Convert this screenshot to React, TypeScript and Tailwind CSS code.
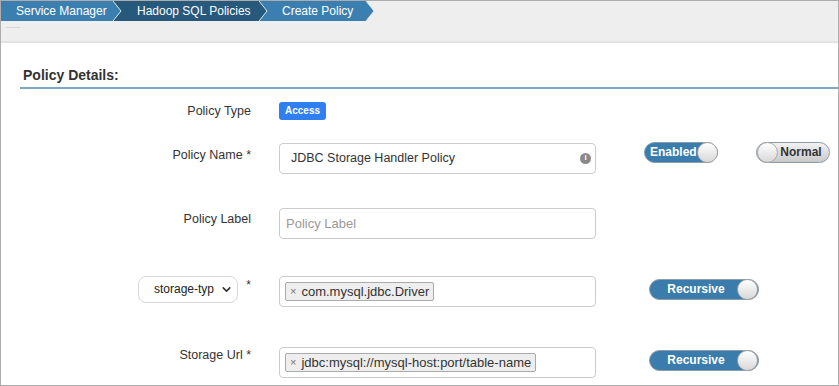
import React from 'react';
import { ChevronDown } from 'lucide-react';

const crumbs = [
  { label: 'Service Manager', bg: '#3b7fb0', next: '#27597c', w: 'w-[112px]', pl: 'pl-[15px]' },
  { label: 'Hadoop SQL Policies', bg: '#27597c', next: '#3b7fb0', w: 'w-[137px]', pl: 'pl-[15px]' },
  { label: 'Create Policy', bg: '#3b7fb0', next: '#eeeeee', w: 'w-[98px]', pl: 'pl-[14px]' },
];

function Crumb({ label, bg, next, w, pl }: (typeof crumbs)[number]) {
  return (
    <div className="flex h-[20px] items-stretch">
      <div className={`${w} ${pl} flex items-center text-[12px] text-white`} style={{ backgroundColor: bg }}>
        {label}
      </div>
      <svg width="9" height="20" viewBox="0 0 9 20" className="block">
        <rect width="9" height="20" fill={next} />
        <path d="M0 0 L8 10 L0 20 Z" fill={bg} />
        <path d="M0 0 L8 10 L0 20" fill="none" stroke="#dbe6ee" strokeWidth="1" />
      </svg>
    </div>
  );
}

function Toggle({ label, on, width }: { label: string; on: boolean; width: string }) {
  return (
    <div
      className={`${width} flex h-[21px] items-center rounded-full border border-[#8c9aa6] ${
        on ? 'bg-[#3a7cab] pl-[5px]' : 'flex-row-reverse bg-gradient-to-b from-[#f2f2f2] to-[#c9c9c9] pr-[5px]'
      }`}
    >
      <span className={`flex-1 text-center text-[12px] font-bold ${on ? 'text-white' : 'text-[#333]'}`}>{label}</span>
      <span className="h-[21px] w-[21px] shrink-0 rounded-full border border-[#a7a7a7] bg-gradient-to-b from-white to-[#d8d8d8]" />
    </div>
  );
}

function Tag({ text }: { text: string }) {
  return (
    <span className="flex h-[19px] items-center gap-[5px] rounded-[2px] border border-[#aaaaaa] bg-[#eeeeee] px-[4px] text-[13px] text-[#333]">
      <span className="text-[11px] text-[#777]">×</span>
      {text}
    </span>
  );
}

function Label({ children }: { children: React.ReactNode }) {
  return <div className="w-[250px] shrink-0 text-right text-[12.5px] text-[#333]">{children}</div>;
}

export default function App() {
  return (
    <div
      className="flex h-[386px] w-[839px] flex-col overflow-hidden border border-[#acacac] bg-white"
      style={{ fontFamily: '"Liberation Sans", Arial, sans-serif' }}
    >
      {/* Breadcrumb header */}
      <div className="h-[42px] shrink-0 border-b-2 border-[#e3e3e3] bg-[#eeeeee]">
        <div className="flex">
          {crumbs.map((c) => (
            <Crumb key={c.label} {...c} />
          ))}
        </div>
        <div className="ml-[5px] mt-[6px] h-[1px] w-[14px] bg-[#d6d6d6]" />
      </div>

      {/* Content */}
      <div className="flex flex-1 flex-col pl-[19px]">
        <div className="mt-[22px] border-b-2 border-[#7ea7c4] pb-[1px] pl-[3px] text-[14px] font-bold text-[#333]">
          Policy Details:
        </div>

        <div className="-ml-[19px] flex flex-col">
          {/* Policy Type */}
          <div className="mt-[13px] flex items-center">
            <Label>Policy Type</Label>
            <span className="ml-[28px] rounded-[3px] bg-[#2f7ff0] px-[6px] py-[3px] text-[10px] font-bold leading-[12px] text-white">
              Access
            </span>
          </div>

          {/* Policy Name */}
          <div className="mt-[22px] flex items-start">
            <div className="mt-[3px]">
              <Label>Policy Name *</Label>
            </div>
            <div className="ml-[28px] flex h-[31px] w-[317px] items-center justify-between rounded-[4px] border border-[#cccccc] pl-[11px] pr-[4px] text-[12.5px] text-[#333]">
              <span>JDBC Storage Handler Policy</span>
              <span className="flex h-[11px] w-[11px] items-center justify-center rounded-full bg-[#8a8a8a] text-[8px] font-bold leading-none text-white">
                i
              </span>
            </div>
            <div className="ml-[48px] mt-[-1px]">
              <Toggle label="Enabled" on width="w-[74px]" />
            </div>
            <div className="ml-[38px] mt-[-1px]">
              <Toggle label="Normal" on={false} width="w-[74px]" />
            </div>
          </div>

          {/* Policy Label */}
          <div className="mt-[34px] flex items-start">
            <div className="mt-[2px]">
              <Label>Policy Label</Label>
            </div>
            <div className="ml-[28px] flex h-[31px] w-[317px] items-center rounded-[4px] border border-[#cccccc] pl-[6px] text-[13px] text-[#999]">
              Policy Label
            </div>
          </div>

          {/* Storage type */}
          <div className="mt-[37px] flex items-start">
            <div className="flex w-[250px] shrink-0 items-start pl-[137px]">
              <div className="flex h-[27px] w-[101px] items-center justify-between rounded-[8px] border border-[#d7d7d7] pl-[15px] pr-[4px] text-[12px] text-[#222]">
                <span>storage-typ</span>
                <ChevronDown className="h-[13px] w-[13px] text-[#333]" strokeWidth={3} />
              </div>
              <span className="ml-[8px] text-[12px] text-[#333]">*</span>
            </div>
            <div className="ml-[28px] flex h-[31px] w-[317px] items-center rounded-[4px] border border-[#cccccc] pl-[5px]">
              <Tag text="com.mysql.jdbc.Driver" />
            </div>
            <div className="ml-[53px] mt-[3px]">
              <Toggle label="Recursive" on width="w-[110px]" />
            </div>
          </div>

          {/* Storage Url */}
          <div className="mt-[40px] flex items-start">
            <div className="-mt-[1px]">
              <Label>Storage Url *</Label>
            </div>
            <div className="ml-[28px] flex h-[31px] w-[317px] items-center rounded-[4px] border border-[#cccccc] pl-[5px]">
              <Tag text="jdbc:mysql://mysql-host:port/table-name" />
            </div>
            <div className="ml-[53px] mt-[3px]">
              <Toggle label="Recursive" on width="w-[110px]" />
            </div>
          </div>
        </div>
      </div>
    </div>
  );
}
